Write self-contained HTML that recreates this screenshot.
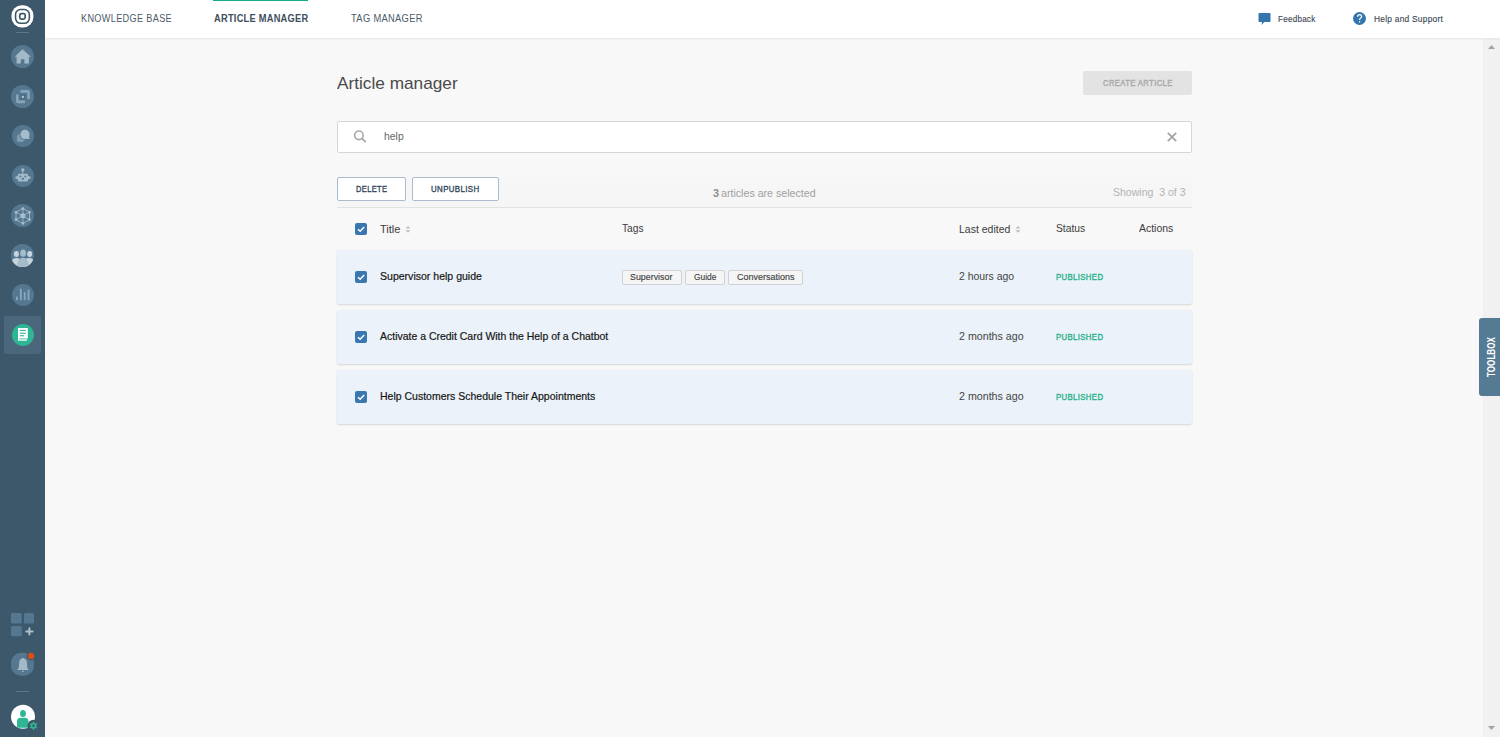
<!DOCTYPE html>
<html><head><meta charset="utf-8">
<style>
html,body{margin:0;padding:0;}
body{width:1500px;height:737px;overflow:hidden;position:relative;background:#f8f8f8;font-family:"Liberation Sans",sans-serif;}
.a{position:absolute;box-sizing:border-box;}
.t{position:absolute;z-index:5;white-space:pre;line-height:1;transform-origin:0 0;font-family:"Liberation Sans",sans-serif;}
#side{left:0;top:0;width:45px;height:737px;background:#3d586b;z-index:6;}
.ic{position:absolute;left:11px;width:23px;height:23px;border-radius:50%;background:#557890;}
.ic svg{position:absolute;left:0;top:0;}
#hdr{left:45px;top:0;width:1455px;height:38px;background:#fff;box-shadow:0 1px 2px rgba(0,0,0,0.09);z-index:1;}
.cb{position:absolute;width:12px;height:12px;border-radius:2px;background:#3a77b0;}
.cb svg{position:absolute;left:0;top:0;}
.row{position:absolute;left:337px;width:855px;height:54px;background:#ebf2f9;border-radius:2px;box-shadow:0 1px 2px rgba(0,0,0,0.13),0 0 1.5px rgba(0,0,0,0.05);}
.tag{position:absolute;top:270px;height:15px;background:#f5f5f5;border:1px solid #d2d2d2;border-radius:2px;box-sizing:border-box;}
.btn{position:absolute;top:177px;height:24px;background:#fff;border:1px solid #a9bccd;border-radius:2px;box-sizing:border-box;}
</style></head><body>
<!-- sidebar -->
<div id="side" class="a">
  <svg class="a" style="left:0;top:0" width="45" height="40" viewBox="0 0 45 40">
    <rect x="11.5" y="5.3" width="21.9" height="22.2" rx="10.2" fill="#fff"/>
    <rect x="15.55" y="9.5" width="13.8" height="13.8" rx="5" fill="none" stroke="#3d586b" stroke-width="1.6"/>
    <rect x="19.75" y="13.7" width="5.4" height="5.4" rx="1.6" fill="none" stroke="#3d586b" stroke-width="1.7"/>
    <line x1="16" y1="32.5" x2="29" y2="32.5" stroke="#587a91" stroke-width="1"/>
  </svg>
  <!-- home -->
  <div class="ic" style="top:45px">
    <svg width="23" height="23" viewBox="0 0 23 23"><path d="M11.5 4.3 L19.9 11.8 H17.9 V18.6 H13.4 V14.2 H9.8 V18.6 H5.6 V11.8 H3.7 Z" fill="#a2b9c8"/></svg>
  </div>
  <!-- copy/engage -->
  <div class="ic" style="top:85px">
    <svg width="23" height="23" viewBox="0 0 23 23">
      <rect x="9.2" y="9.2" width="5.5" height="5.6" fill="#4f6f87"/>
      <path d="M9.4 5 H16.9 Q18.9 5 18.9 7 V14 H16.2 V7.7 H9.4 Z" fill="#87a5b9"/>
      <path d="M5 9.4 V16.2 Q5 18.2 7 18.2 H14 V15.5 H7.6 V9.4 Z" fill="#87a5b9"/>
      <circle cx="11.9" cy="11.9" r="1.1" fill="#b9cbd7"/>
    </svg>
  </div>
  <!-- conversations -->
  <div class="ic" style="left:12px;top:125px;width:22px;height:22px">
    <svg width="22" height="22" viewBox="1 0 22 22">
      <circle cx="10.2" cy="12.6" r="4.3" fill="#7f9db2"/>
      <path d="M5.9 12.6 V16.8 H10.2 Z" fill="#7f9db2"/>
      <circle cx="14" cy="9.4" r="5.6" fill="#557890"/>
      <circle cx="14" cy="9.4" r="4.6" fill="#a6bccb"/>
      <path d="M15.2 13.7 L18.5 14.1 L17.9 11 Z" fill="#a6bccb"/>
    </svg>
  </div>
  <!-- bot -->
  <div class="ic" style="left:12px;top:165px;width:22px;height:22px">
    <svg width="22" height="22" viewBox="0 0 22 22">
      <circle cx="10.8" cy="4.9" r="1.7" fill="#a2b9c8"/>
      <rect x="10.35" y="6" width="0.9" height="3" fill="#a2b9c8"/>
      <rect x="5.9" y="8.8" width="10.1" height="7.8" rx="0.8" fill="#a2b9c8"/>
      <path d="M5.9 10.9 Q3.1 11 3.1 12.6 Q3.1 14.2 5.9 14.3 Z M16 10.9 Q18.8 11 18.8 12.6 Q18.8 14.2 16 14.3 Z" fill="#a2b9c8"/>
      <circle cx="8.5" cy="11.4" r="0.95" fill="#557890"/>
      <circle cx="13.3" cy="11.4" r="0.95" fill="#557890"/>
      <path d="M9.6 13.1 H12.2 Q12 15 10.9 15 Q9.8 15 9.6 13.1 Z" fill="#557890"/>
    </svg>
  </div>
  <!-- network -->
  <div class="ic" style="top:204px">
    <svg width="23" height="23" viewBox="0 0 23 23">
      <g stroke="#a2b9c8" stroke-width="0.9" fill="none">
        <path d="M11.9 4.4 L18.5 8.2 L18.5 15.6 L11.9 19.6 L5 15.6 L5 8.2 Z"/>
        <path d="M11.9 4.4 L11.9 19.6 M5 8.2 L18.5 15.6 M18.5 8.2 L5 15.6"/>
      </g>
      <g fill="#a9bfcd">
        <circle cx="11.9" cy="4.6" r="1.4"/><circle cx="18.5" cy="8.2" r="1.3"/><circle cx="18.5" cy="15.6" r="1.3"/>
        <circle cx="11.9" cy="19.4" r="1.3"/><circle cx="5" cy="15.6" r="1.3"/><circle cx="5" cy="8.2" r="1.3"/>
        <circle cx="11.9" cy="11.7" r="2.5"/>
      </g>
    </svg>
  </div>
  <!-- people -->
  <div class="ic" style="top:244px;overflow:hidden">
    <svg width="23" height="23" viewBox="0 0 23 23">
      <ellipse cx="5.4" cy="9.9" rx="2.5" ry="3" fill="#c6d4de"/>
      <ellipse cx="18.7" cy="9.9" rx="2.5" ry="3" fill="#c6d4de"/>
      <path d="M0 19 Q1 14.1 5.6 14.1 Q10 14.1 11 19 V23 H0 Z" fill="#c6d4de"/>
      <path d="M12.6 19 Q13.6 14.1 18.4 14.1 Q22.6 14.1 23 19 V23 H12.6 Z" fill="#c6d4de"/>
      <ellipse cx="12.1" cy="9.2" rx="2.9" ry="3.6" fill="#a4bbca"/>
      <path d="M6.2 23 Q6.4 13.7 12 13.7 Q17.6 13.7 17.8 23 Z" fill="#a4bbca"/>
    </svg>
  </div>
  <!-- analytics -->
  <div class="ic" style="left:12px;top:284px;width:22px;height:22px">
    <svg width="22" height="22" viewBox="1 0 22 22" fill="#8ca8bb">
      <rect x="5" y="12.6" width="1.8" height="3.6"/>
      <rect x="8.9" y="4.8" width="1.8" height="11.4"/>
      <rect x="12.8" y="8.2" width="1.8" height="8"/>
      <rect x="16.6" y="5.7" width="1.8" height="10.5"/>
    </svg>
  </div>
  <!-- active KB -->
  <div class="a" style="left:4px;top:316px;width:37px;height:38px;background:#4a677c;border-radius:2px"></div>
  <div class="ic" style="left:12px;top:324px;width:22px;height:22px;background:#2eb594">
    <svg width="22" height="22" viewBox="0 0 22 22">
      <path d="M6.4 4 H15.8 V14.4 H7.4 V17 H6.9 Q6 17 6 16.1 V4.4 Q6 4 6.4 4 Z" fill="#fff"/>
      <rect x="7.4" y="15.1" width="7.6" height="1.9" fill="#c9ebe0"/>
      <rect x="7.8" y="5.9" width="6.1" height="1.1" fill="#2eb594"/>
      <rect x="7.8" y="8.7" width="6.1" height="1.1" fill="#2eb594"/>
      <rect x="7.8" y="11.2" width="4.3" height="1.1" fill="#2eb594"/>
    </svg>
  </div>
  <!-- apps -->
  <svg class="a" style="left:0;top:600px" width="45" height="50" viewBox="0 600 45 50">
    <rect x="11" y="613" width="10.8" height="10.6" rx="1.5" fill="#557890"/>
    <rect x="24" y="613" width="10" height="10.6" rx="1.5" fill="#557890"/>
    <rect x="11" y="626" width="10.8" height="10.2" rx="1.5" fill="#557890"/>
    <path d="M26.2 631.4 H32.6 M29.4 628.2 V634.6" stroke="#a9bfcc" stroke-width="2" stroke-linecap="round"/>
  </svg>
  <!-- bell -->
  <svg class="a" style="left:0;top:645px" width="45" height="40" viewBox="0 645 45 40">
    <rect x="11" y="652.8" width="23" height="23" rx="10" fill="#557890"/>
    <circle cx="31" cy="656" r="4.4" fill="#3d586b"/>
    <path d="M22.9 657.8 L20.3 659.5 Q19.4 660.2 19.3 661.5 L18.8 667 Q18.6 668.8 17.1 670 H28.9 Q27.4 668.8 27.2 667 L26.7 661.5 Q26.6 660.2 25.7 659.5 Z" fill="#a4bac9"/>
    <rect x="22.2" y="670.6" width="1.4" height="1.4" fill="#a4bac9"/>
    <circle cx="31" cy="656" r="3.2" fill="#d6501c"/>
  </svg>
  <svg class="a" style="left:0;top:685px" width="45" height="52" viewBox="0 685 45 52">
    <line x1="16" y1="691.5" x2="29" y2="691.5" stroke="#587a91" stroke-width="1"/>
    <circle cx="23" cy="716.8" r="12" fill="#fff"/>
    <ellipse cx="23" cy="713.4" rx="2.9" ry="3.5" fill="#2fb594"/>
    <path d="M17 727.8 V721.4 Q17 717.8 20.6 717.8 H24.9 Q28.5 717.8 28.5 721.4 V727.8 Z" fill="#2fb594"/>
    <circle cx="33.5" cy="725.8" r="6" fill="#3d586b"/>
    <g transform="translate(33.5 725.8)" fill="none" stroke="#2fb594" stroke-width="1.2">
      <circle r="2.2"/>
    </g>
    <g transform="translate(33.5 725.8)" fill="#2fb594">
      <rect x="-0.8" y="-4" width="1.6" height="8"/>
      <rect x="-0.8" y="-4" width="1.6" height="8" transform="rotate(60)"/>
      <rect x="-0.8" y="-4" width="1.6" height="8" transform="rotate(120)"/>
    </g>
    <circle cx="33.5" cy="725.8" r="1.2" fill="#3d586b"/>
  </svg>
</div>

<!-- header -->
<div id="hdr" class="a"></div>
<div class="a" style="left:213px;top:0;width:95px;height:1px;background:#13ad8b;z-index:5"></div>
<svg class="a" style="left:1255px;top:10px;z-index:5" width="20" height="18" viewBox="0 0 20 18">
  <path d="M4.2 3 H14.8 Q15.5 3 15.5 3.7 V11.3 Q15.5 12 14.8 12 H9.4 L6.5 15 L7 12 H4.2 Q3.5 12 3.5 11.3 V3.7 Q3.5 3 4.2 3 Z" fill="#3475ae"/>
</svg>
<svg class="a" style="left:1350px;top:9px;z-index:5" width="20" height="20" viewBox="0 0 20 20">
  <circle cx="9.5" cy="9.5" r="6.5" fill="#3475ae"/>
  <path d="M7.6 7.8 Q7.6 5.6 9.6 5.6 Q11.6 5.6 11.6 7.5 Q11.6 8.6 10.4 9.3 Q9.6 9.8 9.6 11" fill="none" stroke="#fff" stroke-width="1.2"/>
  <rect x="9" y="12.2" width="1.2" height="1.3" fill="#fff"/>
</svg>

<!-- scrollbar -->
<div class="a" style="left:1483px;top:39px;width:17px;height:698px;background:#f1f1f1"></div>
<svg class="a" style="left:1483px;top:39px" width="17" height="17" viewBox="0 0 17 17"><path d="M5 10 L8.5 6 L12 10 Z" fill="#a3a3a3"/></svg>
<svg class="a" style="left:1483px;top:720px" width="17" height="17" viewBox="0 0 17 17"><path d="M5 6 L12 6 L8.5 10 Z" fill="#a3a3a3"/></svg>

<!-- create article -->
<div class="a" style="left:1083px;top:71px;width:109px;height:24px;background:#e3e3e3;border-radius:2px"></div>

<!-- search -->
<div class="a" style="left:337px;top:121px;width:855px;height:32px;background:#fff;border:1px solid #d6d6d6;border-radius:2px"></div>
<svg class="a" style="left:350px;top:126px" width="20" height="20" viewBox="0 0 20 20">
  <circle cx="8.9" cy="9.3" r="4.3" fill="none" stroke="#a8a8a8" stroke-width="1.6"/>
  <path d="M12 12.4 L15.3 15.6" stroke="#a8a8a8" stroke-width="1.8" stroke-linecap="round"/>
</svg>
<svg class="a" style="left:1162px;top:127px" width="20" height="20" viewBox="0 0 20 20">
  <path d="M5.8 5.8 L14.2 14.2 M14.2 5.8 L5.8 14.2" stroke="#a2a2a2" stroke-width="1.7"/>
</svg>

<!-- buttons -->
<div class="a" style="left:337px;top:177px;width:855px;height:30px;background:#f6f6f6"></div>
<div class="btn" style="left:337px;width:69px"></div>
<div class="btn" style="left:412px;width:87px"></div>
<div class="a" style="left:337px;top:207px;width:855px;height:1px;background:#e2e2e2"></div>

<!-- table header -->
<div class="cb" style="left:355px;top:223px"><svg width="12" height="12" viewBox="0 0 12 12"><path d="M3 6.2 L5.1 8.3 L9.2 3.9" fill="none" stroke="#fff" stroke-width="1.4"/></svg></div>
<svg class="a" style="left:404px;top:225px" width="8" height="9" viewBox="0 0 8 9"><path d="M1.5 3.6 L4 1 L6.5 3.6 Z M1.5 5.2 L6.5 5.2 L4 7.8 Z" fill="#bcbcbc"/></svg>
<svg class="a" style="left:1014px;top:225px" width="8" height="9" viewBox="0 0 8 9"><path d="M1.5 3.6 L4 1 L6.5 3.6 Z M1.5 5.2 L6.5 5.2 L4 7.8 Z" fill="#bcbcbc"/></svg>

<!-- rows -->
<div class="row" style="top:250px"></div>
<div class="row" style="top:310px"></div>
<div class="row" style="top:370px"></div>
<div class="cb" style="left:355px;top:271px"><svg width="12" height="12" viewBox="0 0 12 12"><path d="M3 6.2 L5.1 8.3 L9.2 3.9" fill="none" stroke="#fff" stroke-width="1.4"/></svg></div>
<div class="cb" style="left:355px;top:331px"><svg width="12" height="12" viewBox="0 0 12 12"><path d="M3 6.2 L5.1 8.3 L9.2 3.9" fill="none" stroke="#fff" stroke-width="1.4"/></svg></div>
<div class="cb" style="left:355px;top:391px"><svg width="12" height="12" viewBox="0 0 12 12"><path d="M3 6.2 L5.1 8.3 L9.2 3.9" fill="none" stroke="#fff" stroke-width="1.4"/></svg></div>
<div class="tag" style="left:622px;width:60px"></div>
<div class="tag" style="left:685px;width:40px"></div>
<div class="tag" style="left:728px;width:75px"></div>

<!-- toolbox -->
<div class="a" style="left:1479px;top:318px;width:21px;height:78px;background:#557a94;border-radius:3px 0 0 3px"></div>
<div class="t" style="left:1487px;top:377px;font-size:10px;font-weight:700;color:#fff;transform:rotate(-90deg) scaleX(0.81);transform-origin:0 0;">TOOLBOX</div>

<div class="t" style="left:81.30px;top:13px;font-size:11px;font-weight:400;color:#4b5b69;transform:scaleX(0.8311);letter-spacing:0.4px;">KNOWLEDGE BASE</div>
<div class="t" style="left:213.80px;top:13px;font-size:11px;font-weight:700;color:#3f4f5d;transform:scaleX(0.8425);letter-spacing:0.3px;">ARTICLE MANAGER</div>
<div class="t" style="left:351.20px;top:13px;font-size:11px;font-weight:400;color:#4b5b69;transform:scaleX(0.8459);letter-spacing:0.4px;">TAG MANAGER</div>
<div class="t" style="left:1278.00px;top:14px;font-size:10px;font-weight:400;color:#3a4753;transform:scale(0.8082,0.8750);transform-origin:0 8px;-webkit-text-stroke:0.15px #3a4753;letter-spacing:0.3px;">Feedback</div>
<div class="t" style="left:1373.70px;top:14px;font-size:10px;font-weight:400;color:#3a4753;transform:scale(0.8358,0.8750);transform-origin:0 8px;-webkit-text-stroke:0.15px #3a4753;letter-spacing:0.3px;">Help and Support</div>
<div class="t" style="left:337.00px;top:75px;font-size:17px;font-weight:400;color:#4a4a4a;transform:scaleX(1.0135);">Article manager</div>
<div class="t" style="left:1102.80px;top:78px;font-size:10px;font-weight:400;color:#a9a9a9;transform:scale(0.7652,0.8750);transform-origin:0 8px;-webkit-text-stroke:0.45px #a9a9a9;letter-spacing:0.5px;">CREATE ARTICLE</div>
<div class="t" style="left:384.30px;top:131px;font-size:11px;font-weight:400;color:#666666;transform:scaleX(0.9478);">help</div>
<div class="t" style="left:355.80px;top:184px;font-size:10px;font-weight:400;color:#34495c;transform:scale(0.7476,0.8750);transform-origin:0 8px;-webkit-text-stroke:0.4px #34495c;letter-spacing:0.5px;">DELETE</div>
<div class="t" style="left:431.40px;top:184px;font-size:10px;font-weight:400;color:#34495c;transform:scale(0.7867,0.8750);transform-origin:0 8px;-webkit-text-stroke:0.4px #34495c;letter-spacing:0.5px;">UNPUBLISH</div>
<div class="t" style="left:712.90px;top:188px;font-size:11px;font-weight:700;color:#8f8f8f;">3</div>
<div class="t" style="left:720.50px;top:188px;font-size:11px;font-weight:400;color:#a0a0a0;transform:scaleX(0.9672);">articles are selected</div>
<div class="t" style="left:1112.80px;top:187px;font-size:11px;font-weight:400;color:#b3b3b3;transform:scaleX(0.9563);">Showing  3 of 3</div>
<div class="t" style="left:380.00px;top:224px;font-size:11px;font-weight:400;color:#3c3c3c;">Title</div>
<div class="t" style="left:622.00px;top:223px;font-size:11px;font-weight:400;color:#3c3c3c;transform:scaleX(0.9269);">Tags</div>
<div class="t" style="left:958.70px;top:224px;font-size:11px;font-weight:400;color:#3c3c3c;transform:scaleX(0.9534);">Last edited</div>
<div class="t" style="left:1056.00px;top:223px;font-size:11px;font-weight:400;color:#3c3c3c;transform:scaleX(0.9342);">Status</div>
<div class="t" style="left:1138.50px;top:223px;font-size:11px;font-weight:400;color:#3c3c3c;transform:scaleX(0.9515);">Actions</div>
<div class="t" style="left:380.10px;top:271px;font-size:11px;font-weight:400;color:#161616;transform:scaleX(0.9578);-webkit-text-stroke:0.2px #161616;">Supervisor help guide</div>
<div class="t" style="left:958.70px;top:271px;font-size:11px;font-weight:400;color:#454545;transform:scaleX(0.9486);">2 hours ago</div>
<div class="t" style="left:1056.10px;top:272px;font-size:10px;font-weight:400;color:#2bb28c;transform:scale(0.7740,0.8750);transform-origin:0 8px;-webkit-text-stroke:0.45px #2bb28c;letter-spacing:0.5px;">PUBLISHED</div>
<div class="t" style="left:380.10px;top:331px;font-size:11px;font-weight:400;color:#161616;transform:scaleX(0.9524);-webkit-text-stroke:0.2px #161616;">Activate a Credit Card With the Help of a Chatbot</div>
<div class="t" style="left:958.70px;top:331px;font-size:11px;font-weight:400;color:#454545;transform:scaleX(0.9694);">2 months ago</div>
<div class="t" style="left:1056.10px;top:332px;font-size:10px;font-weight:400;color:#2bb28c;transform:scale(0.7740,0.8750);transform-origin:0 8px;-webkit-text-stroke:0.45px #2bb28c;letter-spacing:0.5px;">PUBLISHED</div>
<div class="t" style="left:380.10px;top:391px;font-size:11px;font-weight:400;color:#161616;transform:scaleX(0.9549);-webkit-text-stroke:0.2px #161616;">Help Customers Schedule Their Appointments</div>
<div class="t" style="left:958.70px;top:391px;font-size:11px;font-weight:400;color:#454545;transform:scaleX(0.9694);">2 months ago</div>
<div class="t" style="left:1056.10px;top:392px;font-size:10px;font-weight:400;color:#2bb28c;transform:scale(0.7740,0.8750);transform-origin:0 8px;-webkit-text-stroke:0.45px #2bb28c;letter-spacing:0.5px;">PUBLISHED</div>
<div class="t" style="left:630.00px;top:272px;font-size:10px;font-weight:400;color:#3f3f3f;transform:scale(0.8872,0.8750);transform-origin:0 8px;-webkit-text-stroke:0.15px #3f3f3f;">Supervisor</div>
<div class="t" style="left:693.70px;top:272px;font-size:10px;font-weight:400;color:#3f3f3f;transform:scale(0.8369,0.8750);transform-origin:0 8px;-webkit-text-stroke:0.15px #3f3f3f;">Guide</div>
<div class="t" style="left:736.80px;top:272px;font-size:10px;font-weight:400;color:#3f3f3f;transform:scale(0.8980,0.8750);transform-origin:0 8px;-webkit-text-stroke:0.15px #3f3f3f;">Conversations</div>
</body></html>
